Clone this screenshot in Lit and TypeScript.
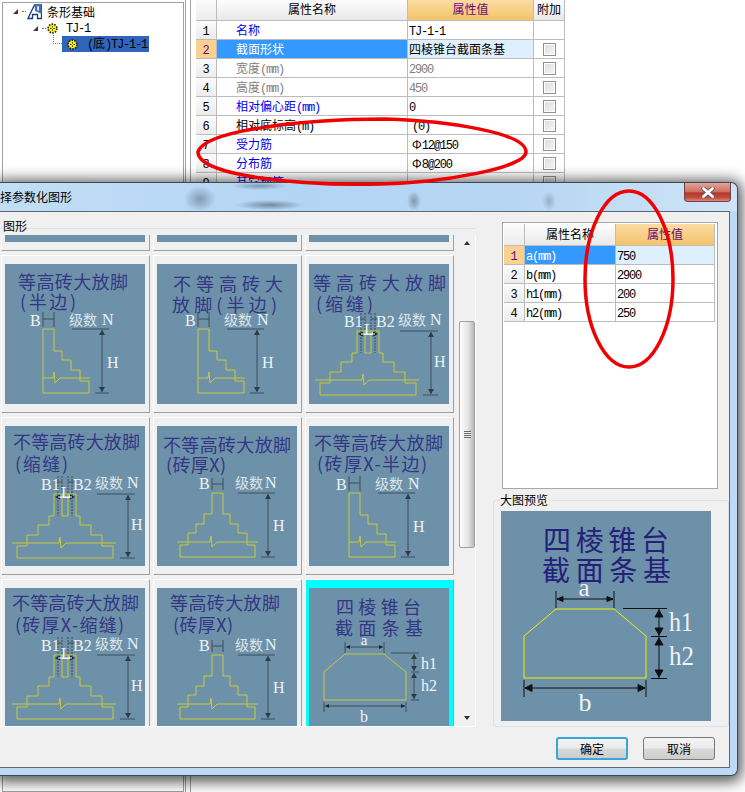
import { LitElement, html, css, svg } from "lit";
import { customElement } from "lit/decorators.js";

type Line = [string, number, number, number];

const Y = "#c9c93a";
const D = "#3f4f5c";

const vDim = (x: number, y1: number, y2: number, c = "#2e3a44") => svg`
  <line x1=${x} y1=${y1} x2=${x} y2=${y2} stroke=${D} stroke-width="1"/>
  <polygon points="${x - 3},${y1 + 5} ${x + 3},${y1 + 5} ${x},${y1}" fill=${c}/>
  <polygon points="${x - 3},${y2 - 5} ${x + 3},${y2 - 5} ${x},${y2}" fill=${c}/>`;

const hLine = (x1: number, x2: number, y: number, c = D) =>
  svg`<line x1=${x1} x2=${x2} y1=${y} y2=${y} stroke=${c} stroke-width="1"/>`;
const vLine = (x: number, y1: number, y2: number, c = D) =>
  svg`<line x1=${x} x2=${x} y1=${y1} y2=${y2} stroke=${c} stroke-width="1"/>`;

const brk = (x1: number, zx: number, x2: number, y: number) => svg`
  <polyline fill="none" stroke=${Y} stroke-width="1" points="${x1},${y} ${zx},${y} ${zx + 1},${y - 6} ${zx + 2},${y + 5} ${zx + 7},${y} ${x2},${y}"/>`;

const lab = (s: string, x: number, y: number, size = 16) =>
  svg`<text class="lab" x=${x} y=${y} font-size=${size}>${s}</text>`;
const jishu = (x: number, y: number, nx: number) => svg`
  <text class="js" x=${x} y=${y} font-size="14">级数</text>
  <text class="lab" x=${nx} y=${y} font-size="16">N</text>`;

const half = (dx: number, dy: number) => svg`<g transform="translate(${dx} ${dy})">
  <polyline fill="none" stroke=${Y} stroke-width="1" points="38,65 49,65 49,87 57,87 57,96 66,96 66,106 75,106 75,117 84,117 84,129 38,129 38,65"/>
  ${brk(38, 48, 85, 114)}
  ${vLine(38, 48, 63)}${vLine(49, 48, 63)}${hLine(38, 49, 55)}
  ${lab("B", 25, 62)}
  ${jishu(64, 61, 97)}
  ${hLine(67, 104, 65)}${hLine(90, 104, 129)}
  ${vDim(97, 66, 128)}
  ${lab("H", 102, 104)}
</g>`;

const joint = (dx: number, dy: number) => svg`<g transform="translate(${dx} ${dy})">
  <polyline fill="none" stroke=${Y} stroke-width="1" points="48,67 48,89 43,89 43,98 32,98 32,108 21,108 21,119 11,119 11,131 107,131 107,119 96,119 96,108 85,108 85,98 74,98 74,89 70,89 70,67 48,67"/>
  <polyline fill="none" stroke=${Y} stroke-width="1" points="56,67 56,89 62,89 62,67"/>
  ${brk(6, 53, 110, 116)}
  <g stroke-dasharray="2 1">${vLine(52, 49, 89)}${vLine(56, 49, 67)}${vLine(62, 49, 67)}${vLine(66, 49, 89)}</g>
  ${hLine(50, 56, 55)}${hLine(62, 68, 55)}
  ${lab("B1", 35, 63)}${lab("B2", 67, 63)}
  ${jishu(89, 61, 121)}
  ${lab("L", 55, 71)}
  <polygon points="49,70 54,67.5 54,72.5" fill="#1e2428"/><polygon points="69,70 64,67.5 64,72.5" fill="#1e2428"/>
  ${hLine(52, 66, 70, "#fff")}
  ${hLine(91, 129, 67)}${hLine(114, 129, 131)}
  ${vDim(122, 68, 130)}
  ${lab("H", 125, 103)}
</g>`;

const solid = (dx: number, dy: number) => svg`<g transform="translate(${dx} ${dy})">
  <polyline fill="none" stroke=${Y} stroke-width="1" points="55,67 55,88 47,88 47,98 39,98 39,107 31,107 31,119 23,119 23,131 98,131 98,119 90,119 90,107 81,107 81,98 73,98 73,88 66,88 66,67 55,67"/>
  ${brk(20, 53, 101, 116)}
  ${vLine(55, 52, 64)}${vLine(66, 52, 64)}${hLine(55, 66, 58)}
  ${lab("B", 42, 63)}
  ${jishu(78, 62, 108)}
  ${hLine(81, 118, 67)}${hLine(104, 118, 131)}
  ${vDim(111, 68, 130)}
  ${lab("H", 116, 105)}
</g>`;

const trap = () => svg`
  <polygon fill="none" stroke=${Y} points="36,66 75,66 97,84 97,112 15,112 15,84"/>
  ${vLine(36, 54, 65)}${vLine(75, 54, 65)}
  <line x1="37" x2="74" y1="59" y2="59" stroke=${D}/>
  <polygon points="37,59 41,57 41,61" fill="#1e2428"/><polygon points="74,59 70,57 70,61" fill="#1e2428"/>
  <text class="lab" x="55" y="57" font-size="15" text-anchor="middle">a</text>
  ${hLine(82, 110, 65)}${hLine(102, 110, 84)}${hLine(102, 110, 112)}
  ${vDim(105, 66, 83)}${vDim(105, 85, 111)}
  ${lab("h1", 112, 81)}${lab("h2", 112, 103)}
  ${vLine(15, 114, 124)}${vLine(97, 114, 124)}
  <line x1="16" x2="96" y1="118" y2="118" stroke=${D}/>
  <polygon points="16,118 20,116 20,120" fill="#1e2428"/><polygon points="96,118 92,116 92,120" fill="#1e2428"/>
  <text class="lab" x="55" y="134" font-size="16" text-anchor="middle">b</text>`;

interface Thumb { title: Line[]; art?: unknown; sel?: boolean }

const thumbs: Thumb[] = [
  { title: [] }, { title: [] }, { title: [] },
  { title: [["等高砖大放脚", 13, 25, 110], ["(半边)", 15, 45, 56]], art: half(0, 0) },
  { title: [["不等高砖大", 16, 27, 110], ["放脚(半边)", 15, 48, 105]], art: half(3, 0) },
  { title: [["等高砖大放脚", 4, 26, 133], ["(缩缝)", 7, 47, 57]], art: joint(0, 0) },
  { title: [["不等高砖大放脚", 8, 23, 127], ["(缩缝)", 10, 45, 53]], art: joint(1, 1) },
  { title: [["不等高砖大放脚", 6, 26, 128], ["(砖厚X)", 9, 46, 60]], art: solid(0, 0) },
  { title: [["不等高砖大放脚", 5, 24, 129], ["(砖厚X-半边)", 8, 45, 110]], art: half(2, 2) },
  { title: [["不等高砖大放脚", 7, 22, 127], ["(砖厚X-缩缝)", 10, 44, 109]], art: joint(1, 0) },
  { title: [["等高砖大放脚", 13, 22, 110], ["(砖厚X)", 16, 44, 60]], art: solid(0, 0) },
  { title: [["四棱锥台", 27, 26, 85], ["截面条基", 26, 47, 88]], art: trap(), sel: true },
];

/* Wraps ASCII runs so Latin has the narrow half-width cell of the source UI. */
const t = (s: string) =>
  s.split(/([\x20-\x7e]+)/).map((p, i) => (i % 2 ? html`<span class="lat">${p}</span>` : p));

type Row = { name: string; val: string; cls: string; vcls?: string; check: boolean };
const rows: Row[] = [
  { name: "名称", val: "TJ-1-1", cls: "blue", check: false },
  { name: "截面形状", val: "四棱锥台截面条基", cls: "cur", vcls: "curv", check: true },
  { name: "宽度(mm)", val: "2900", cls: "gray", vcls: "gray", check: true },
  { name: "高度(mm)", val: "450", cls: "gray", vcls: "gray", check: true },
  { name: "相对偏心距(mm)", val: "0", cls: "blue", check: true },
  { name: "相对底标高(m)", val: "(0)", cls: "", vcls: "ind", check: true },
  { name: "受力筋", val: "Φ12@150", cls: "blue", vcls: "ind", check: true },
  { name: "分布筋", val: "Φ8@200", cls: "blue", vcls: "ind", check: true },
  { name: "其它钢筋", val: "", cls: "blue", check: true },
];
const params = [
  ["a(mm)", "750"],
  ["b(mm)", "2900"],
  ["h1(mm)", "200"],
  ["h2(mm)", "250"],
];

const gear = html`<svg class="gear" width="11" height="11" viewBox="0 0 11 11">
  <circle cx="5.5" cy="5.5" r="4.4" fill="#ffee00" stroke="#1a1a00" stroke-width="1.6" stroke-dasharray="1.5 1.25"/>
  <circle cx="5.5" cy="5.5" r="3" fill="#fff200"/>
  <path d="M5.5 3v5M3 5.5h5" stroke="#4a4400" stroke-width="1"/>
  <circle cx="5.5" cy="5.5" r="1" fill="#fffde0"/>
</svg>`;

@customElement("app-root")
export class AppRoot extends LitElement {
  static styles = css`
    :host {
      display: block; position: relative; width: 745px; height: 792px; overflow: hidden;
      background: #fff; color: #000;
      font: 12px/19px "Noto Sans CJK SC", "Liberation Sans", sans-serif;
    }
    .lat { font-family: "Liberation Mono", monospace; font-size: 12px; letter-spacing: -1.2px; white-space: pre; }
    .bg { display: flex; height: 792px; }

    .tree {
      width: 182px; margin-left: 2px; border: 1px solid #a0a0a0;
      margin-top: 2px; height: 790px; box-sizing: border-box; flex: none;
    }
    .node { display: flex; align-items: center; height: 16px; }
    .n1 { padding-left: 10px; height: 17px; }
    .n2 { padding-left: 30px; }
    .n3 { padding-left: 50px; }
    .tri { width: 0; height: 0; border-left: 5px solid transparent; border-bottom: 5px solid #3a3a3a; flex: none; }
    .dots { width: 4px; border-top: 1px dotted #777; margin: 0 1px 0 4px; flex: none; }
    .conn { width: 9px; height: 9px; margin-top: -9px; border-left: 1px dotted #777; border-bottom: 1px dotted #777; flex: none; box-sizing: border-box; }
    .l1 { margin-left: 5px; }
    .l2 { margin-left: 8px; }
    .sel { display: flex; align-items: center; width: 87px; height: 16px; background: #3165bb; padding-left: 5px; box-sizing: border-box; }
    .sel .lbl { margin-left: 9px; white-space: nowrap; }
    .split { width: 4px; margin-left: 1px; border-right: 1px solid #a0a0a0; border-left: 1px solid #a0a0a0; flex: none; }

    .grid { display: grid; font-size: 12px; }
    .top { margin-left: 5px; width: 369px; grid-template-columns: 21px 191px 126px 31px; grid-template-rows: 21px repeat(9, 19px); height: 192px; }
    .c { border-right: 1px solid #bcbcbc; border-bottom: 1px solid #bcbcbc; box-sizing: border-box; white-space: nowrap; overflow: hidden; line-height: 18px; }
    .num { background: linear-gradient(#fbfbfb, #ececec); text-align: center; color: #000; }
    .num .lat { letter-spacing: 0; }
    .hd { background: linear-gradient(#fdfdfd, #e9e9e9); text-align: center; font-size: 12px; }
    .hdv { background: linear-gradient(#fbdca2, #f4c36a); color: #660a78; text-align: center; }
    .name { padding-left: 19px; }
    .val { padding-left: 1px; }
    .ind { padding-left: 4px; }
    .blue { color: #0000f0; }
    .gray { color: #808080; }
    .cur { background: #3399ff; color: #fff; }
    .curv { background: #def0ff; }
    .curn { background: #fcd08f; color: #660a78; }
    .chk { display: flex; align-items: center; justify-content: center; }
    .box { width: 13px; height: 13px; box-sizing: border-box; border: 1px solid #8f8f8f; background: linear-gradient(135deg, #dcdcdc, #f6f6f6); box-shadow: inset 0 0 0 1px #fff; }

    .dlg {
      position: absolute; left: 0; top: 182px; width: 738px; height: 594px; box-sizing: border-box;
      border: 1px solid #3f4952; border-left: 0; border-radius: 0 7px 7px 0;
      box-shadow: 0 2px 14px 4px rgba(0,0,0,.66);
      display: flex; flex-direction: column;
      background: #bcdaf5;
    }
    .bar {
      height: 28px; flex: none; display: flex; justify-content: space-between; align-items: flex-start;
      border-radius: 0 7px 0 0; line-height: 28px; padding-right: 6px;
      background:
        radial-gradient(ellipse 16px 13px at 200px 16px, rgba(90,115,140,.6), transparent),
        radial-gradient(ellipse 34px 5px at 270px 22px, rgba(70,90,110,.62), transparent),
        radial-gradient(ellipse 28px 4px at 260px 3px, rgba(70,90,120,.5), transparent),
        radial-gradient(ellipse 7px 10px at 414px 18px, rgba(70,90,110,.5), transparent),
        radial-gradient(ellipse 7px 10px at 549px 18px, rgba(80,105,130,.35), transparent),
        linear-gradient(90deg, #c2def6, #b3d5f4 40%, #b6d6f3 70%, #cfe4f8);
    }
    .close {
      width: 47px; height: 19px; box-sizing: border-box; border: 1px solid #6d4240; border-top: 0; border-radius: 0 0 4px 4px;
      background: linear-gradient(#e0a69b, #cf6f62 48%, #b5382c 55%, #c2493c 80%, #d98a7e);
      display: flex; align-items: center; justify-content: center;
    }
    .client {
      flex: 1; margin: 0 7px 7px 0; background: #f0f0f0; border-top: 1px solid #5c6974; border-right: 1px solid #5c6974; border-bottom: 1px solid #5c6974;
      display: flex; flex-direction: column; min-height: 0;
    }
    .main { display: flex; height: 514px; flex: none; }
    .left { width: 476px; flex: none; display: flex; flex-direction: column; }
    .legend {
      height: 23px; flex: none; padding-left: 3px; line-height: 27px;
      background: linear-gradient(#dfe3e6, #dfe3e6) 0 16px / 100% 1px no-repeat;
    }
    .panel { display: flex; height: 491px; border-right: 1px solid #fff; border-bottom: 1px solid #fff; }
    .scroller { width: 458px; overflow: hidden; flex: none; }
    .cards { display: grid; grid-template-columns: repeat(3, 149px); gap: 4px 3px; margin: -142px 0 0 1px; }
    .card {
      box-sizing: border-box; height: 158px; padding: 8px 3px; background: #f0f0f0;
      border: 1px solid; border-color: #fff #a0a0a0 #a0a0a0 #fff;
    }
    .card.on { background: #00ffff; }
    .card svg { display: block; background: #6d91a8; }
    .ttl { fill: #2b2a80; fill-opacity: .9; font-family: "Noto Sans CJK SC", sans-serif; }
    .lab { fill: #eef3f6; font-family: "Liberation Serif", serif; }
    .js { fill: #dde5ea; font-family: "Noto Sans CJK SC", sans-serif; }
    .sb { width: 16px; margin-left: 1px; display: flex; flex-direction: column; align-items: stretch; flex: none; }
    .arr { height: 16px; flex: none; display: flex; align-items: center; justify-content: center; }
    .up { width: 0; height: 0; border: 3.5px solid transparent; border-top: 0; border-bottom: 4px solid #303030; }
    .dn { width: 0; height: 0; border: 3.5px solid transparent; border-bottom: 0; border-top: 4px solid #303030; }
    .sp1 { height: 70px; flex: none; }
    .thumb {
      height: 227px; flex: none; box-sizing: border-box; border: 1px solid #a2a2a2; border-radius: 2px;
      background: linear-gradient(90deg, #fdfdfd, #e6e6e6 55%, #b9b9b9);
      display: flex; align-items: center; justify-content: center;
    }
    .grip { width: 7px; height: 7px; background: repeating-linear-gradient(#6a6a6a 0 1px, #eee 1px 2px); }
    .sp2 { flex: 1; }

    .right { flex: 1; display: flex; flex-direction: column; }
    .ptable { margin: 10px 0 0 26px; width: 216px; height: 267px; flex: none; box-sizing: border-box; border: 1px solid #a8a8a8; background: #fff; padding: 1px 0 0 1px; }
    .ptable .grid { grid-template-columns: 21px 91px 99px; grid-template-rows: 22px repeat(4, 19px); width: 211px; }
    .ptable .c { line-height: 17px; }
    .ptable .hrow { line-height: 20px; }
    .ptable .pn { padding-left: 1px; }
    .group { margin: 11px 0 0 17px; width: 236px; height: 227px; flex: none; box-sizing: border-box; border: 1px solid #dbe0e4; border-radius: 3px; }
    .gl { display: block; width: fit-content; margin: -8px 0 5px 6px; padding-right: 1px; background: #f0f0f0; line-height: 13px; height: 13px; }
    .group svg { display: block; margin-left: 7px; background: #6d91a8; }
    .pttl { fill: #24207a; font-family: "Noto Sans CJK SC", sans-serif; }
    .foot { display: flex; justify-content: flex-end; gap: 15px; padding: 11px 14px 0 0; }
    .btn {
      width: 72px; height: 23px; box-sizing: border-box; border: 1px solid #7a7a7a; border-radius: 3px;
      background: linear-gradient(#f4f4f4, #ebebeb 48%, #d8d8d8 52%, #cdcdcd);
      text-align: center; line-height: 21px; font-size: 12px;
    }
    .btn.def { border: 2px solid #38a6d8; line-height: 19px; }

    .ink { position: absolute; left: 0; top: 0; pointer-events: none; }
  `;

  render() {
    return html`
      <div class="bg">
        <div class="tree">
          <div class="node n1">
            <span class="tri"></span><span class="dots"></span>
            <svg width="15" height="17" viewBox="0 0 15 17">
              <path d="M1 15.5 4.5 8 7.5 2H14.5V15.5H10.5V11.5H5.5V15.5Z" fill="#fff" stroke="#1b3c7a" stroke-width="1.3"/>
              <path d="M7.5 2H14.5V11L10.5 9 8 8Z" fill="#3f73b5"/><path d="M10 3.5 12 3V8L10 7Z" fill="#d5e4f3"/>
            </svg>
            <span class="l1">条形基础</span>
          </div>
          <div class="node n2">
            <span class="tri"></span><span class="dots"></span>${gear}
            <span class="l2"><span class="lat">TJ-1</span></span>
          </div>
          <div class="node n3">
            <span class="conn"></span>
            <span class="sel">${gear}<span class="lbl">${t("(底)TJ-1-1")}</span></span>
          </div>
        </div>
        <div class="split"></div>
        <div class="grid top">
          <div class="c num"></div><div class="c hd">属性名称</div><div class="c hdv">属性值</div><div class="c hd">附加</div>
          ${rows.map((r, i) => html`
            <div class="c num ${i === 1 ? "curn" : ""}"><span class="lat">${i + 1}</span></div>
            <div class="c name ${r.cls}">${t(r.name)}</div>
            <div class="c val ${r.vcls ?? ""}">${t(r.val)}</div>
            <div class="c chk">${r.check ? html`<span class="box"></span>` : ""}</div>`)}
        </div>
      </div>

      <div class="dlg">
        <div class="bar">
          <span>择参数化图形</span>
          <span class="close">
            <svg width="14" height="11" viewBox="0 0 14 11">
              <path d="M2.5 1.5 11.5 9.5M11.5 1.5 2.5 9.5" stroke="#5b5b5b" stroke-width="4.4" stroke-linecap="round"/>
              <path d="M2.5 1.5 11.5 9.5M11.5 1.5 2.5 9.5" stroke="#fff" stroke-width="2.8" stroke-linecap="round"/>
            </svg>
          </span>
        </div>
        <div class="client">
          <div class="main">
            <div class="left">
              <div class="legend">图形</div>
              <div class="panel">
                <div class="scroller"><div class="cards">
                  ${thumbs.map((th) => html`
                    <div class="card ${th.sel ? "on" : ""}">
                      <svg width="140" height="140" viewBox="0 0 140 140">
                        ${th.title.map(([s, x, y, len]) => svg`<text class="ttl" x=${x} y=${y} font-size="18" textLength=${len}>${s}</text>`)}
                        ${th.art ?? ""}
                      </svg>
                    </div>`)}
                </div></div>
                <div class="sb">
                  <div class="arr"><span class="up"></span></div>
                  <div class="sp1"></div>
                  <div class="thumb"><span class="grip"></span></div>
                  <div class="sp2"></div>
                  <div class="arr"><span class="dn"></span></div>
                </div>
              </div>
            </div>
            <div class="right">
              <div class="ptable">
                <div class="grid">
                  <div class="c num hrow"></div><div class="c hd hrow">属性名称</div><div class="c hdv hrow">属性值</div>
                  ${params.map(([n, v], i) => html`
                    <div class="c num ${i === 0 ? "curn" : ""}"><span class="lat">${i + 1}</span></div>
                    <div class="c pn ${i === 0 ? "cur" : ""}">${t(n)}</div>
                    <div class="c pn ${i === 0 ? "curv" : ""}">${t(v)}</div>`)}
                </div>
              </div>
              <div class="group">
                <span class="gl">大图预览</span>
                <svg width="210" height="210" viewBox="0 0 210 210">
                  <text class="pttl" x="42" y="40" font-size="28" textLength="126">四棱锥台</text>
                  <text class="pttl" x="41" y="70" font-size="28" textLength="129">截面条基</text>
                  <polygon fill="none" stroke="#f2f000" stroke-width="1" points="55,98 113,98 145,125 145,167 23,167 23,125"/>
                  <g stroke="#111" fill="#111">
                    <line x1="55" x2="55" y1="80" y2="97"/><line x1="113" x2="113" y1="80" y2="97"/>
                    <line x1="56" x2="112" y1="88" y2="88"/>
                    <polygon points="56,88 62,85.5 62,90.5"/><polygon points="112,88 106,85.5 106,90.5"/>
                    <line x1="122" x2="166" y1="97.5" y2="97.5"/><line x1="150" x2="166" y1="125.5" y2="125.5"/><line x1="150" x2="166" y1="167.5" y2="167.5"/>
                    <line x1="158" x2="158" y1="98" y2="167"/>
                    <polygon points="158,99 154,106 162,106"/><polygon points="158,124 154,117 162,117"/>
                    <polygon points="158,127 154,134 162,134"/><polygon points="158,166 154,159 162,159"/>
                    <line x1="23" x2="23" y1="169" y2="186"/><line x1="145" x2="145" y1="169" y2="186"/>
                    <line x1="24" x2="144" y1="177" y2="177"/>
                    <polygon points="24,177 31,173.5 31,180.5"/><polygon points="144,177 137,173.5 137,180.5"/>
                  </g>
                  <text class="lab" x="83" y="85" font-size="25" text-anchor="middle">a</text>
                  <text class="lab" x="168" y="120" font-size="27" textLength="24" lengthAdjust="spacingAndGlyphs">h1</text>
                  <text class="lab" x="168" y="154" font-size="27" textLength="25" lengthAdjust="spacingAndGlyphs">h2</text>
                  <text class="lab" x="84" y="200" font-size="26" text-anchor="middle">b</text>
                </svg>
              </div>
            </div>
          </div>
          <div class="foot">
            <div class="btn def">确定</div>
            <div class="btn">取消</div>
          </div>
        </div>
      </div>

      <svg class="ink" width="745" height="792" viewBox="0 0 745 792">
        <path d="M198 152C204 131 300 119 385 119C450 121 526 133 526 152C526 168 440 183 380 184C300 186 198 176 198 152Z" fill="none" stroke="#f00000" stroke-width="3.5"/>
        <ellipse cx="629" cy="279" rx="44" ry="88" fill="none" stroke="#f00000" stroke-width="3.5"/>
      </svg>
    `;
  }
}
